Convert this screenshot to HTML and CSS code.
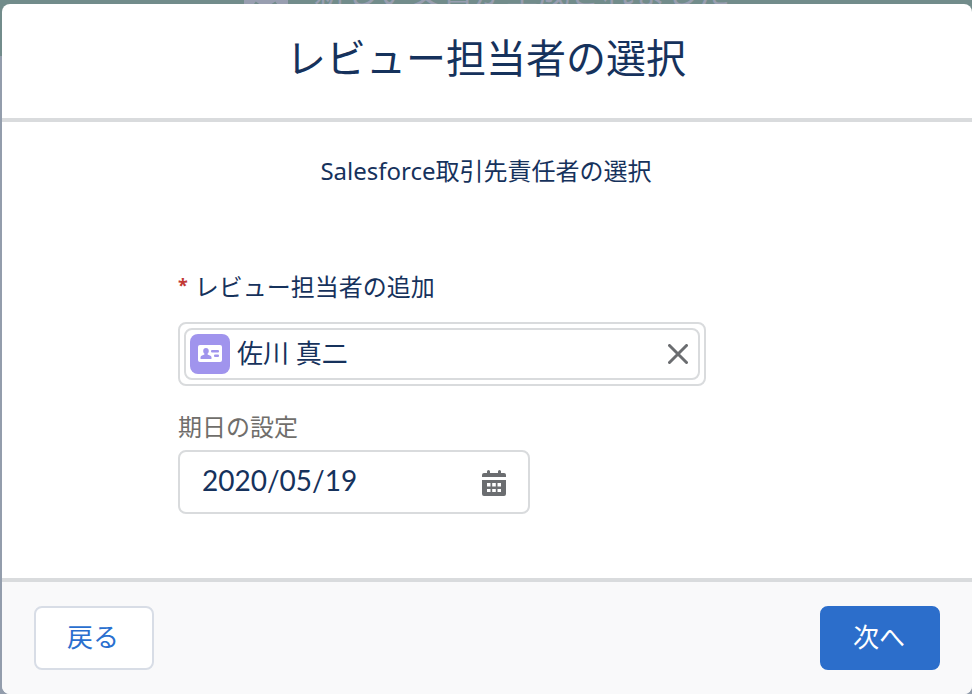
FILE: index.html
```
<!DOCTYPE html>
<html lang="ja">
<head>
    <meta charset="UTF-8">
    <meta name="viewport" content="width=device-width, initial-scale=1.0">
    <title>レビュー担当者の選択</title>
    <link rel="stylesheet" href="styles.css">
</head>
<body>
    <div class="backdrop" aria-hidden="true">
        <div class="toast">
            <svg class="toast-icon" width="44" height="44" viewBox="0 0 44 44">
                <rect width="44" height="44" rx="2" fill="#989eb0"/>
                <path d="M10 36l11 8 12-8" fill="none" stroke="#728c8b" stroke-width="6"/>
            </svg>
            <span>新しい文書が生成されました</span>
        </div>
    </div>
    <form class="modal" role="dialog" aria-labelledby="modalTitle">
        <header class="modal-header">
            <h1 id="modalTitle">レビュー担当者の選択</h1>
        </header>
        <main class="modal-body">
            <h2>Salesforce取引先責任者の選択</h2>
            <div class="fields">
                <label class="label" for="reviewer"><span class="required">*</span>レビュー担当者の追加</label>
                <div class="lookup">
                    <div class="pill">
                        <svg class="contact-icon" width="40" height="40" viewBox="0 0 40 40" aria-hidden="true">
                            <rect width="40" height="40" rx="8" fill="#a094ed"/>
                            <rect x="8" y="11" width="24" height="17" rx="2" fill="#fff"/>
                            <path d="M16 14c1.700 0 2.800 1.200 2.800 2.900 0 1.100-.5 2.100-1.200 2.700v.8l2.800 1.300c.8.400 1.100 1 1.100 1.800v.9c0 .4-.3.600-.6.600h-9.800c-.4 0-.6-.3-.6-.6v-.9c0-.8.3-1.400 1-1.700l2.900-1.400v-.8c-.8-.6-1.200-1.600-1.200-2.700 0-1.700 1-2.900 2.800-2.900z" fill="#a094ed"/>
                            <rect x="21" y="16" width="8" height="2.500" rx="1" fill="#a094ed"/>
                            <rect x="24" y="20.500" width="5" height="2.500" rx="1" fill="#a094ed"/>
                        </svg>
                        <input type="text" id="reviewer" name="reviewer" value="佐川 真二" required>
                        <button type="button" class="icon-btn" id="clearReviewer" aria-label="選択をクリア">
                            <svg width="20" height="20" viewBox="0 0 20 20">
                                <path d="M1.500 1.500l17 17M18.500 1.500l-17 17" stroke="#6b6d70" stroke-width="3" stroke-linecap="round"/>
                            </svg>
                        </button>
                    </div>
                </div>
                <label class="label label-weak" for="dueDate">期日の設定</label>
                <div class="date-field">
                    <input type="text" id="dueDate" name="dueDate" value="2020/05/19">
                    <button type="button" class="icon-btn" aria-label="日付を選択">
                        <svg width="24" height="30" viewBox="0 0 24 30" fill="#6b6d70">
                            <path d="M2 6h3V4.500a1.500 1.500 0 0 1 3 0V6h8V4.500a1.500 1.500 0 0 1 3 0V6h3a2 2 0 0 1 2 2v2H0V8a2 2 0 0 1 2-2z"/>
                            <path fill-rule="evenodd" d="M0 13h24v14a2 2 0 0 1-2 2H2a2 2 0 0 1-2-2zM5 16v3.500h3.500V16zM10.200 16v3.500h3.600V16zM15.500 16v3.500H19V16zM5 22v3h3.500v-3zM10.200 22v3h3.600v-3zM15.500 22v3H19v-3z"/>
                        </svg>
                    </button>
                </div>
            </div>
        </main>
        <footer class="modal-footer">
            <button type="button" class="btn">戻る</button>
            <button type="submit" class="btn btn-brand">次へ</button>
        </footer>
    </form>
    <script>
        const reviewer = document.getElementById("reviewer");

        document.getElementById("clearReviewer").addEventListener("click", function() {
            reviewer.value = "";
            reviewer.focus();
        });

        document.querySelector(".modal").addEventListener("submit", function(event) {
            event.preventDefault();
        });
    </script>
</body>
</html>
```
FILE: styles.css
```
* {
    box-sizing: border-box;
}

body {
    margin: 0;
    font-family: "Noto Sans", "Noto Sans CJK JP", sans-serif;
    font-size: 24px;
    line-height: 36px;
    color: #16325c;
    background-color: #939dac;
}

h1, h2 {
    margin: 0;
    font-weight: 400;
    text-align: center;
}

/* dimmed page behind the dialog */
.backdrop {
    position: absolute;
    inset: 0;
    z-index: -1;
    overflow: hidden;
}

.toast {
    display: flex;
    align-items: flex-end;
    justify-content: center;
    gap: 26px;
    height: 56px;
    padding: 0 0 44px 2px;
    background-color: #728c8b;
    color: #989eb0;
    font-size: 32px;
    line-height: 40px;
}

.toast-icon {
    flex: none;
}

.modal {
    margin: 4px 0 0 2px;
    border-radius: 8px;
    overflow: hidden;
    background-color: #ffffff;
}

.modal-header {
    padding: 24px 34px 30px 32px;
    border-bottom: 4px solid #d9dbdd;
}

.modal-header h1 {
    font-size: 40px;
    line-height: 60px;
}

.modal-body {
    padding: 31px 34px 64px 32px;
}

.modal-body h2 {
    font-size: 24px;
}

.fields {
    max-width: 616px;
    margin: 80px auto 0;
    padding-right: 88px;
}

.label {
    display: block;
}

.label-weak {
    margin-top: 23px;
    color: #706e6b;
}

.required {
    margin-right: 7px;
    color: #c23934;
    font-size: 18px;
    font-weight: 700;
    line-height: 1;
    vertical-align: 4px;
}

.lookup {
    margin-top: 17px;
    padding: 4px;
    border: 2px solid #d9dbdd;
    border-radius: 8px;
}

.pill {
    display: flex;
    align-items: center;
    gap: 7px;
    padding: 4px 10px 4px 4px;
    border: 2px solid #d9dbdd;
    border-radius: 8px;
}

.contact-icon {
    flex: none;
}

input {
    flex: 1;
    min-width: 0;
    padding: 0 0 4px;
    border: none;
    outline: none;
    background: none;
    color: inherit;
    font-family: inherit;
    font-size: 26px;
}

.icon-btn {
    display: flex;
    padding: 0;
    border: none;
    background: none;
    cursor: pointer;
}

.date-field {
    display: flex;
    align-items: center;
    width: 352px;
    max-width: 100%;
    height: 64px;
    margin-top: 5px;
    padding: 0 22px;
    border: 2px solid #d9dbdd;
    border-radius: 8px;
}

.date-field input {
    font-family: Lato, "Noto Sans", sans-serif;
    font-size: 28px;
}

.modal-footer {
    display: flex;
    justify-content: space-between;
    padding: 24px 32px;
    border-top: 4px solid #d9dbdd;
    background-color: #f9f9fa;
}

.btn {
    min-width: 120px;
    height: 64px;
    padding: 0 32px 4px 30px;
    border: 2px solid #d8dde6;
    border-radius: 8px;
    background-color: #ffffff;
    color: #2a6fcf;
    font-family: inherit;
    font-size: 26px;
    cursor: pointer;
}

.btn-brand {
    border-color: #2c6ecb;
    background-color: #2c6ecb;
    color: #ffffff;
}
```
